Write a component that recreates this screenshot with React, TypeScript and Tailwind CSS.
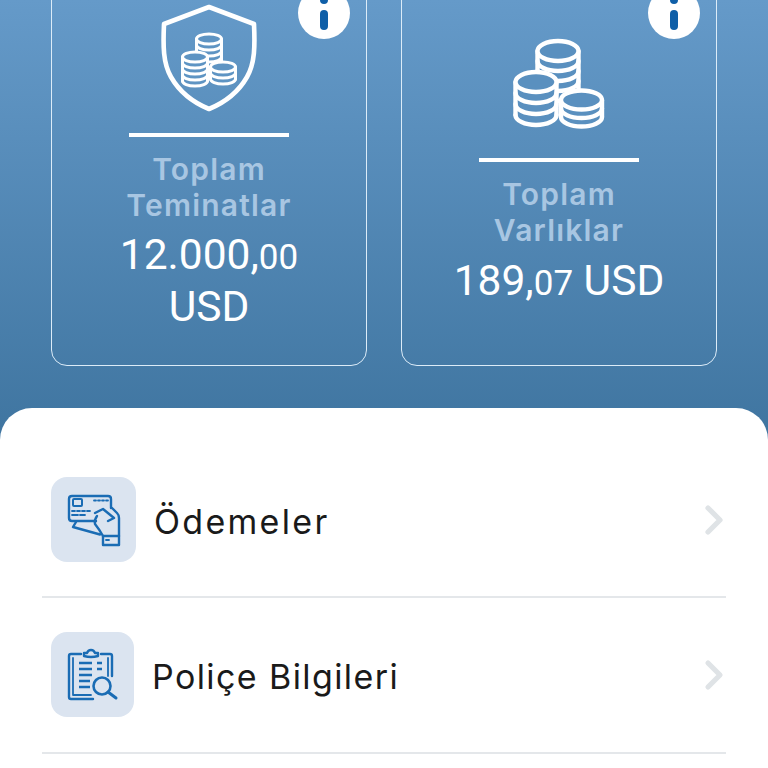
import { ChevronRight } from "lucide-react";

function InfoBadge() {
  return (
    <div className="absolute right-[16px] top-[20px] h-[52px] w-[52px] rounded-full bg-white">
      <svg width="52" height="52" viewBox="0 0 52 52">
        <rect x="22" y="8" width="8" height="9" rx="4" fill="#0f5fa8" />
        <rect x="22" y="23" width="8" height="20" rx="4" fill="#0f5fa8" />
      </svg>
    </div>
  );
}

function Stack({ cx, cy, rx, ry, step, n, sw, fill }: { cx: number; cy: number; rx: number; ry: number; step: number; n: number; sw: number; fill: string }) {
  const bottom = cy + step * n;
  const arcs = [];
  for (let i = 1; i <= n; i++) {
    arcs.push(<path key={i} d={`M${cx - rx} ${cy + step * i}A${rx} ${ry} 0 0 0 ${cx + rx} ${cy + step * i}`} />);
  }
  return (
    <g stroke="#fff" strokeWidth={sw} fill="none" strokeLinecap="round">
      <path d={`M${cx - rx} ${cy}V${bottom}A${rx} ${ry} 0 0 0 ${cx + rx} ${bottom}V${cy}Z`} fill={fill} stroke="none" />
      <path d={`M${cx - rx} ${cy}V${bottom}M${cx + rx} ${cy}V${bottom}`} />
      {arcs}
      <ellipse cx={cx} cy={cy} rx={rx} ry={ry} fill={fill} />
    </g>
  );
}

function ShieldIcon() {
  return (
    <svg width="96" height="108" viewBox="161 3 96 108">
      <path
        d="M209 6L254 23C255 45 255 62 247 76C239 90 226 101 209 108C192 101 179 90 171 76C163 62 163 45 164 23Z"
        fill="none"
        stroke="#fff"
        strokeWidth="4.6"
        strokeLinejoin="round"
      />
      <Stack cx={209} cy={38} rx={12.5} ry={5} step={6} n={4} sw={3} fill="#5e94c3" />
      <Stack cx={195} cy={56} rx={12.5} ry={5} step={6} n={4} sw={3} fill="#5e94c3" />
      <Stack cx={223} cy={66} rx={12.5} ry={5} step={6} n={2} sw={3} fill="#5e94c3" />
    </svg>
  );
}

function CoinsIcon() {
  return (
    <svg width="92" height="92" viewBox="513 37 92 92">
      <Stack cx={558} cy={50} rx={20.5} ry={10} step={10} n={4} sw={4.4} fill="#5a90bf" />
      <Stack cx={536} cy={81} rx={20.5} ry={10} step={11} n={3} sw={4.4} fill="#5a90bf" />
      <Stack cx={581.5} cy={99} rx={20.5} ry={9.5} step={8.5} n={2} sw={4.4} fill="#5a90bf" />
    </svg>
  );
}

function CardHandIcon() {
  return (
    <svg width="54" height="54" viewBox="67 492 54 54" fill="none" stroke="#1a6cb4" strokeWidth="2.4" strokeLinejoin="round" strokeLinecap="round">
      <path d="M96 520H72Q69 520 69 517V498Q69 495 72 495H108Q111 495 111 498V507" />
      <rect x="73" y="498" width="9" height="7" rx="1" strokeWidth="2" />
      <path d="M94 499.5H96M98 499.5H100M102 499.5H104M106 499.5H108" strokeWidth="1.8" />
      <path d="M72 510H75M77 510H80M82 510H85M87 510H90M72 514H78M80 514H85" strokeWidth="1.8" />
      <path d="M76 521L73 526L100 533.5" />
      <path d="M112 507L117 512Q119 514 119 517V535" />
      <path d="M95 512L103 508L114 517L108 520" />
      <path d="M97 515Q94 519 95 523Q99 528 103 535" />
      <rect x="103" y="535" width="16" height="9" />
      <path d="M106 539H109" strokeWidth="1.8" />
    </svg>
  );
}

function PolicyIcon() {
  return (
    <svg width="52" height="54" viewBox="66 648 52 54" fill="none" stroke="#1a6cb4" strokeWidth="2.4" strokeLinejoin="round" strokeLinecap="round">
      <path d="M80 654H70Q68 654 68 656V697Q68 699 70 699H92" />
      <path d="M100 654H109Q111 654 111 656V676" />
      <path d="M72 658V695H90M107 658V676" strokeWidth="1.8" />
      <path d="M83 656V653H86Q87 650 90 650Q93 650 94 653H97V656Q90 658 83 656Z" />
      <path d="M78 663H91M96 663H101M78 669H91M96 669H101M78 675H91M78 681H89M78 687H89" strokeWidth="2.6" strokeLinecap="butt" />
      <circle cx="101" cy="686" r="8.5" strokeWidth="2.6" />
      <path d="M107 692L115 698" strokeWidth="3" />
    </svg>
  );
}

export default function App() {
  return (
    <div className="h-[768px] w-full overflow-hidden bg-white font-['Inter',sans-serif]">
      <div className="h-[450px] bg-gradient-to-b from-[#659ac9] to-[#3e749f]">
        <div className="flex gap-[34px] px-[51px] pt-0">
          <div className="relative -mt-[34px] flex h-[400px] w-[316px] flex-col items-center rounded-[16px] border border-[#dcecf8] pt-[37px]">
            <InfoBadge />
            <ShieldIcon />
            <div className="mt-[21px] h-[4px] w-[160px] bg-white" />
            <p className="mt-[14px] text-center text-[30px] font-semibold leading-[36px] tracking-[1.2px] text-[#a8c6e2]">
              Toplam
              <br />
              Teminatlar
            </p>
            <p className="mt-[7px] text-center font-['Roboto',sans-serif] text-[42.5px] leading-[49px] text-white">
              12.000,<span className="text-[35px]">00</span>
              <br />
              USD
            </p>
          </div>
          <div className="relative -mt-[34px] flex h-[400px] w-[316px] flex-col items-center rounded-[16px] border border-[#dcecf8] pt-[71px]">
            <InfoBadge />
            <CoinsIcon />
            <div className="mt-[28px] h-[4px] w-[160px] bg-white" />
            <p className="mt-[14px] text-center text-[30px] font-semibold leading-[36px] tracking-[1.2px] text-[#a8c6e2]">
              Toplam
              <br />
              Varlıklar
            </p>
            <p className="mt-[8px] text-center font-['Roboto',sans-serif] text-[42.5px] leading-[50px] text-white">
              189,<span className="text-[35px]">07</span> USD
            </p>
          </div>
        </div>
      </div>
      <div className="-mt-[42px] h-[360px] rounded-t-[32px] bg-white px-[42px] pt-[69px]">
        <div className="flex h-[121px] items-start border-b-2 border-[#e4e7ea] pl-[9px]">
          <div className="flex h-[85px] w-[85px] items-center justify-center rounded-[16px] bg-[#dbe4f0]">
            <CardHandIcon />
          </div>
          <span className="ml-[18px] mt-[23px] text-[34px] leading-[44px] tracking-[2.3px] text-[#1a1a1a]">Ödemeler</span>
          <ChevronRight className="ml-auto mr-[-12px] mt-[19px] text-[#dfe3e6]" size={48} strokeWidth={2.6} />
        </div>
        <div className="flex h-[156px] items-start border-b-2 border-[#e4e7ea] pl-[9px] pt-[34px]">
          <div className="flex h-[85px] w-[83px] items-center justify-center rounded-[16px] bg-[#dbe4f0]">
            <PolicyIcon />
          </div>
          <span className="ml-[18px] mt-[23px] text-[34px] leading-[44px] tracking-[1.4px] text-[#1a1a1a]">Poliçe Bilgileri</span>
          <ChevronRight className="ml-auto mr-[-12px] mt-[19px] text-[#dfe3e6]" size={48} strokeWidth={2.6} />
        </div>
      </div>
    </div>
  );
}
